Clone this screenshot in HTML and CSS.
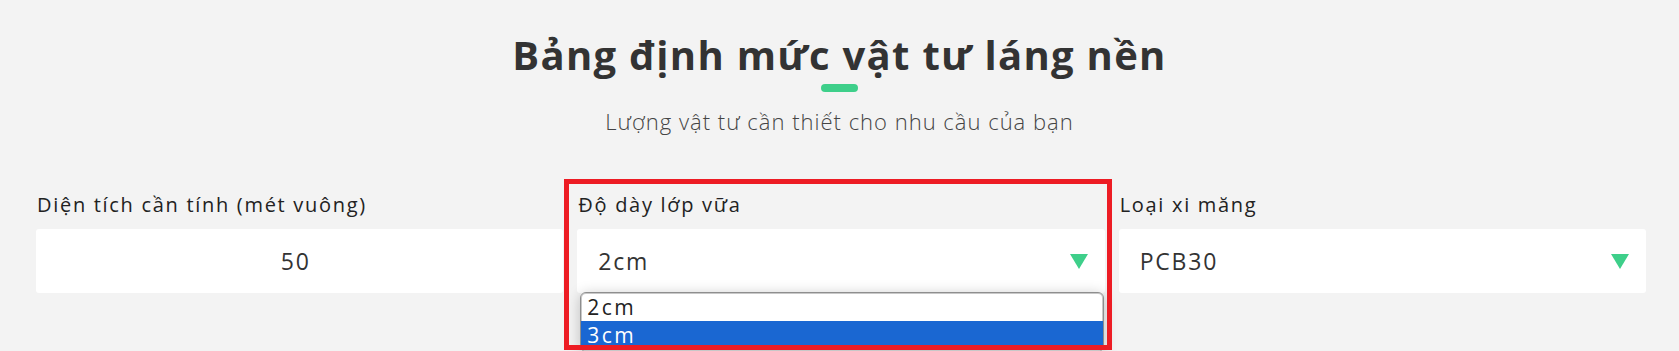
FILE: index.html
```html
<!DOCTYPE html>
<html lang="vi">
<head>
<meta charset="utf-8">
<title>Bảng định mức vật tư láng nền</title>
<link rel="stylesheet" href="styles.css">
</head>
<body>
<section class="calc">
  <header class="calc-head">
    <h1 class="calc-title">Bảng định mức vật tư láng nền</h1>
    <div class="calc-bar"></div>
    <p class="calc-sub">Lượng vật tư cần thiết cho nhu cầu của bạn</p>
  </header>
  <div class="calc-fields">
    <div class="field">
      <label class="field-label">Diện tích cần tính (mét vuông)</label>
      <div class="field-box field-input">50</div>
    </div>
    <div class="field">
      <label class="field-label">Độ dày lớp vữa</label>
      <div class="field-box field-select">
        <span>2cm</span>
        <svg class="caret" width="18" height="15" viewBox="0 0 18 15"><path d="M0 0H18L9 15Z" fill="#3ecf8a"/></svg>
      </div>
      <div class="popup">
        <div class="opt">2cm</div>
        <div class="opt opt-sel">3cm</div>
      </div>
      <div class="highlight"></div>
    </div>
    <div class="field">
      <label class="field-label">Loại xi măng</label>
      <div class="field-box field-select">
        <span>PCB30</span>
        <svg class="caret" width="18" height="15" viewBox="0 0 18 15"><path d="M0 0H18L9 15Z" fill="#3ecf8a"/></svg>
      </div>
    </div>
  </div>
</section>
</body>
</html>
```
FILE: styles.css
```css
html, body {
  margin: 0;
  height: 351px;
  overflow: hidden;
}
body {
  background: #f3f3f3;
  font-family: "Open Sans", "Noto Sans", sans-serif;
  color: #333;
}
.calc-head {
  text-align: center;
  padding-top: 31px;
}
.calc-title {
  margin: 0;
  font-size: 40px;
  line-height: 48px;
  font-weight: 700;
  letter-spacing: 1.3px;
  color: #333;
}
.calc-bar {
  width: 37px;
  height: 8px;
  border-radius: 4px;
  background: #3ecf8a;
  margin: 5px auto 0;
}
.calc-sub {
  margin: 14px 0 0;
  font-size: 22px;
  line-height: 30px;
  font-weight: 300;
  letter-spacing: 1px;
  color: #444;
}
.calc-fields {
  display: grid;
  grid-template-columns: repeat(3, 1fr);
  column-gap: 14px;
  padding: 0 33px 0 36px;
  margin-top: 57px;
}
.field {
  position: relative;
  display: flex;
  flex-direction: column;
}
.field-label {
  font-size: 20px;
  line-height: 24px;
  letter-spacing: 1.7px;
  color: #222;
  padding-left: 1px;
}
.field-box {
  margin-top: 12px;
  height: 64px;
  background: #fff;
  border-radius: 3px;
  font-size: 23px;
  letter-spacing: 1.8px;
  color: #333;
  box-sizing: border-box;
}
.field-input {
  display: flex;
  align-items: center;
  justify-content: center;
  padding-right: 8px;
}
.field-select {
  display: flex;
  align-items: center;
  justify-content: space-between;
  padding: 0 17px 0 21px;
}
.caret {
  display: block;
}
.popup {
  position: absolute;
  left: 3px;
  top: 99px;
  width: 524px;
  height: 60px;
  box-sizing: border-box;
  border: 1px solid #8e8e8e;
  border-radius: 6px;
  background: #fff;
  overflow: hidden;
  box-shadow: inset 0 0 0 1px #c8c8c8, 0 2px 14px rgba(0,0,0,0.22);
}
.opt {
  height: 28px;
  line-height: 29px;
  font-size: 21px;
  letter-spacing: 2.4px;
  padding-left: 6px;
  color: #222;
}
.opt-sel {
  background: #1a67d2;
  color: #fff;
}
.highlight {
  position: absolute;
  left: -13px;
  top: -14px;
  width: 548px;
  height: 171px;
  box-sizing: border-box;
  border: 5px solid #ed1c24;
  pointer-events: none;
}
```
